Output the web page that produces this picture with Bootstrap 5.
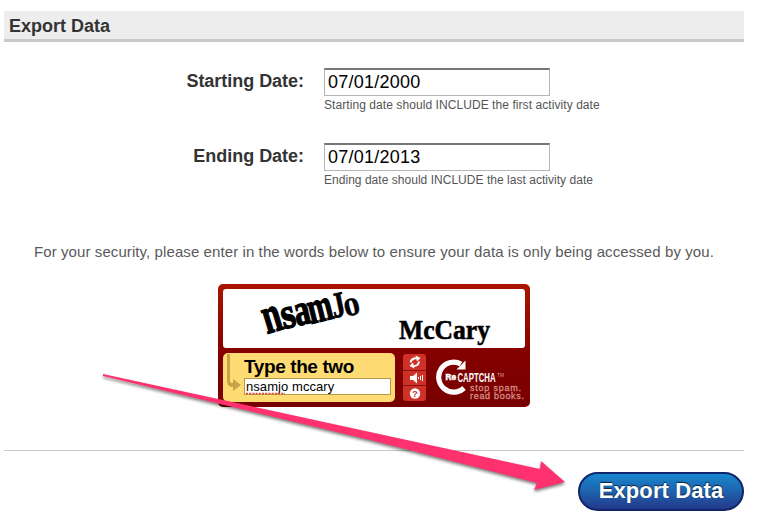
<!DOCTYPE html>
<html lang="en">
<head>
<meta charset="utf-8">
<meta name="viewport" content="width=device-width, initial-scale=1">
<title>Export Data</title>
<link href="https://cdn.jsdelivr.net/npm/bootstrap@5.3.0/dist/css/bootstrap.min.css" rel="stylesheet">
<style>
body{font-family:"Liberation Sans",Arial,sans-serif;color:#333;height:520px;overflow:hidden;background:#fff}
.page{width:740px;margin-left:4px;padding-top:11px}
.section-title{height:31px;background:#ededed;border-bottom:3px solid #c9c9c9;font-size:18px;font-weight:700;line-height:30px;padding-left:5px;margin:0}
.dates{padding-top:26px}
.date-row{height:75px;gap:20px}
.date-label{width:300px;font-size:18px;font-weight:700;line-height:26px;letter-spacing:-.03px}
.date-box{width:226px;height:28px;min-height:0;border:1px solid #b5b5b5;border-top:2px solid #777;border-radius:0;padding:0 3px;font-size:18px;line-height:25px;letter-spacing:.25px;color:#000}
.date-hint{font-size:12px;line-height:17px;color:#555;white-space:nowrap;letter-spacing:.07px;padding-top:1px}
.date-hint-end{letter-spacing:.03px}
.security{font-size:15px;line-height:20px;color:#5a5a5a;white-space:nowrap;letter-spacing:.09px;margin:24px 0 22px}
.captcha{width:312px;height:123px;border-radius:5px;background:linear-gradient(#ab1500,#820000 60%,#780000);padding:5px}
.captcha-words{width:302px;height:59px;border-radius:3px;background:#fff}
.captcha-words svg,.entry svg,.tools svg,.brand svg,.pointer{display:block}
.captcha-words svg{overflow:visible}
.captcha-bottom{margin-top:5px}
.entry{width:172px;height:49px;border-radius:5px;background:#ffdc73}
.entry-mark{width:21px}
.entry-title{font-size:19px;font-weight:700;line-height:20px;color:#000;padding-top:4px;height:25px;letter-spacing:-.4px}
.entry-box{width:147px;height:17px;min-height:0;border:1px solid #b5984a;border-radius:0;font-size:13px;line-height:15px;padding:0 1px;color:#000;letter-spacing:.07px}
.tools{margin:1px 0 0 8px}
.brand{margin-left:6px}
.footer-rule{height:1px;background:#c8c8c8;margin-top:43px}
.export-btn,.export-btn:hover{width:166px;height:39px;border:2px solid #10256b;border-radius:20px;background:linear-gradient(#1787ce,#1e62ad 50%,#24398a);color:#fff;font-size:22px;font-weight:700;line-height:32px;padding:0 0 2px;text-shadow:0 -1px 1px #123;letter-spacing:.1px;margin-top:21px}
.pointer{left:0;top:0;pointer-events:none}
</style>
</head>
<body class="position-relative">
<main class="page">
  <h1 class="section-title">Export Data</h1>
  <form class="m-0">
    <div class="dates">
      <div class="date-row d-flex">
        <label class="date-label text-end" for="start">Starting Date:</label>
        <div>
          <input id="start" class="form-control date-box" value="07/01/2000" spellcheck="false">
          <div class="date-hint">Starting date should INCLUDE the first activity date</div>
        </div>
      </div>
      <div class="date-row d-flex">
        <label class="date-label text-end" for="end">Ending Date:</label>
        <div>
          <input id="end" class="form-control date-box" value="07/01/2013" spellcheck="false">
          <div class="date-hint date-hint-end">Ending date should INCLUDE the last activity date</div>
        </div>
      </div>
    </div>
    <p class="security text-center">For your security, please enter in the words below to ensure your data is only being accessed by you.</p>
    <div class="captcha mx-auto">
      <div class="captcha-words">
        <svg width="302" height="59" viewBox="223 289 302 59">
          <g font-family="Liberation Serif,serif" font-weight="700" fill="#000" stroke="#000" stroke-width="1.4">
            <text transform="translate(267 334) rotate(-17) scale(.64 1)" font-size="52">n</text>
            <text transform="translate(284 329) rotate(-14) scale(.85 1)" font-size="43">s</text>
            <text transform="translate(297 326) rotate(-13) scale(.72 1)" font-size="44">a</text>
            <text transform="translate(311 324) rotate(-14) scale(.66 1)" font-size="45">m</text>
            <text transform="translate(334 318) rotate(-12) scale(.75 1)" font-size="36" stroke-width=".8">J</text>
            <text transform="translate(346 317) rotate(-14) scale(.9 1)" font-size="36" stroke-width=".3">o</text>
          </g>
          <text x="399" y="339" textLength="91" lengthAdjust="spacingAndGlyphs" font-family="Liberation Serif,serif" font-weight="700" font-size="28" stroke="#000" stroke-width=".6">McCary</text>
        </svg>
      </div>
      <div class="captcha-bottom d-flex">
        <div class="entry d-flex">
          <div class="entry-mark">
            <svg width="21" height="49" viewBox="0 0 21 49"><path d="M4 1h3v27q0 2 3 2V26l8 6-8 6v-4Q4 34 4 28z" fill="#c9a34c"/></svg>
          </div>
          <div>
            <div class="entry-title">Type the two</div>
            <div class="position-relative">
              <input class="form-control entry-box" value="nsamjo mccary" aria-label="Type the two words" spellcheck="false">
              <svg class="position-absolute bottom-0 start-0" width="44" height="3"><path d="M2 1.500H41" stroke="#e23b30" stroke-width="1.500" stroke-dasharray="2 1.200"/></svg>
            </div>
          </div>
        </div>
        <div class="tools">
          <svg width="23" height="47" viewBox="0 0 23 47">
            <rect width="23" height="47" rx="3" fill="#cd3127"/>
            <path d="M0 16.500h23M0 31.500h23" stroke="#8e0d08"/>
            <g fill="none" stroke="#fff" stroke-width="2"><path d="M7.500 8.500Q8.500 4 13.500 4.200"/><path d="M16 7.500Q15.500 12 10.500 12"/></g>
            <path d="M12.500 1.500l5 2.500-3.500 3.500zM11.500 14.500l-5-2.500 3.500-3.500z" fill="#fff"/>
            <path d="M7 22h3l4-3.500v11L10 26H7z" fill="#fff"/>
            <path d="M15.500 23v2M17.500 22v4M19.500 21v6" stroke="#fff" stroke-width="1"/>
            <circle cx="12" cy="39.500" r="5.200" fill="#fff"/>
            <text x="12" y="43" text-anchor="middle" font-family="Liberation Sans,sans-serif" font-weight="700" font-size="9.500" fill="#cd3127">?</text>
          </svg>
        </div>
        <div class="brand">
          <svg width="93" height="50" viewBox="432 353 93 50">
            <path d="M461 364A15 15 0 1 0 464 388" fill="none" stroke="#fff" stroke-width="5.200"/>
            <path d="M465.500 360.500V369.500H456.500z" fill="#fff"/>
            <g font-family="Liberation Sans,sans-serif" fill="#fff">
              <text x="445.500" y="380" font-size="8.500" font-weight="700" textLength="10.500" lengthAdjust="spacingAndGlyphs" stroke="#fff" stroke-width=".5">Re</text>
              <text transform="translate(457.500 382)" font-size="12.500" font-weight="700" textLength="38" lengthAdjust="spacingAndGlyphs">CAPTCHA</text>
              <text x="497" y="377" font-size="5" fill="#d99" textLength="7" lengthAdjust="spacingAndGlyphs">TM</text>
              <g font-size="9" fill="#d78d89" stroke="#d78d89" stroke-width=".3">
                <text x="470" y="391" textLength="51">stop spam.</text>
                <text x="470" y="399" textLength="54">read books.</text>
              </g>
            </g>
          </svg>
        </div>
      </div>
    </div>
    <div class="footer-rule"></div>
    <div class="d-flex justify-content-end">
      <button type="button" class="btn export-btn">Export Data</button>
    </div>
  </form>
</main>
<svg class="pointer position-absolute" width="761" height="520" viewBox="0 0 761 520">
  <path d="M103 374L540 469L541 461L565 482L534 490L537 483L370 440L103 376Z" fill="#ff326f" style="filter:drop-shadow(0 2px 1.500px rgba(0,0,0,.5))"/>
</svg>
<script src="https://cdn.jsdelivr.net/npm/bootstrap@5.3.0/dist/js/bootstrap.bundle.min.js"></script>
</body>
</html>
